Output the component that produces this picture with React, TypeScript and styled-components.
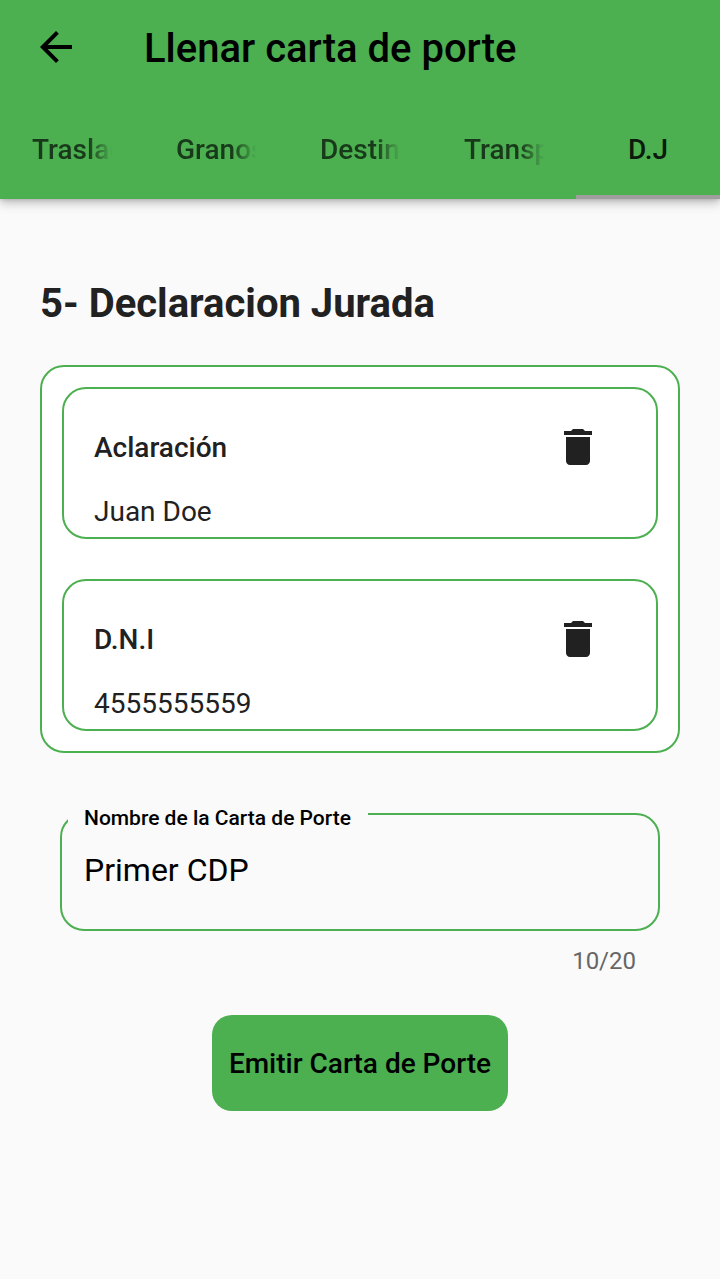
import React from 'react';
import styled, { createGlobalStyle } from 'styled-components';

const GREEN = '#4caf50';
const INK = '#212121';
const PAGE = '#fafafa';

const GlobalStyle = createGlobalStyle`
  *, *::before, *::after { box-sizing: border-box; }
  body { margin: 0; background: ${PAGE}; font-family: Roboto, sans-serif; }
`;

const Screen = styled.div`
  display: flex;
  flex-direction: column;
  width: 720px;
  height: 1279px;
  background: ${PAGE};
  overflow: hidden;
`;

const Header = styled.header`
  background: ${GREEN};
  height: 199px;
  flex: none;
  box-shadow: 0 4px 10px rgba(0, 0, 0, 0.24), 0 1px 4px rgba(0, 0, 0, 0.14);
`;

const Toolbar = styled.div`
  display: flex;
  align-items: center;
  height: 103px;
  padding: 0 32px 7px;
`;

const BackButton = styled.button`
  display: flex;
  padding: 0;
  border: 0;
  background: none;
  color: #000;
  margin: 0 64px 2px 0;
`;

const Title = styled.h1`
  margin: 2px 0 0;
  font-size: 40px;
  line-height: 48px;
  font-weight: 500;
  color: #000;
`;

const Tabs = styled.nav`
  display: grid;
  grid-template-columns: repeat(5, minmax(0, 1fr));
  height: 96px;
`;

const Tab = styled.div<{ $active?: boolean }>`
  display: flex;
  align-items: center;
  justify-content: center;
  padding: 2px 32px 0;
  border-bottom: 4px solid ${p => (p.$active ? '#9e9e9e' : 'transparent')};
  color: ${p => (p.$active ? 'rgba(0,0,0,0.87)' : 'rgba(0,0,0,0.67)')};
`;

const TabLabel = styled.span<{ $fade: boolean }>`
  overflow: hidden;
  white-space: nowrap;
  font-size: 28px;
  line-height: 36px;
  font-weight: 500;
  mask-image: ${p => (p.$fade ? 'linear-gradient(to right, #000 calc(100% - 24px), transparent)' : 'none')};
`;

const Content = styled.main`
  display: flex;
  flex-direction: column;
  padding: 81px 40px 0;
`;

const Heading = styled.h2`
  margin: 0 0 37px;
  font-size: 40px;
  line-height: 48px;
  font-weight: 700;
  color: ${INK};
`;

const CardGroup = styled.section`
  display: flex;
  flex-direction: column;
  gap: 40px;
  padding: 20px;
  border: 2px solid ${GREEN};
  border-radius: 24px;
  background: #fff;
`;

const Card = styled.article`
  height: 152px;
  padding: 34px 54px 0 30px;
  border: 2px solid ${GREEN};
  border-radius: 24px;
  background: #fff;
`;

const CardTop = styled.div`
  display: flex;
  align-items: center;
  justify-content: space-between;
  height: 48px;
  margin-bottom: 24px;
`;

const CardTitle = styled.h3`
  margin: 2px 0 0;
  font-size: 28px;
  line-height: 34px;
  font-weight: 500;
  color: ${INK};
`;

const CardValue = styled.p`
  margin: 0;
  font-size: 28px;
  line-height: 34px;
  color: ${INK};
`;

const IconButton = styled.button`
  display: flex;
  padding: 0;
  border: 0;
  background: none;
  color: ${INK};
`;

const Field = styled.label`
  position: relative;
  display: block;
  height: 118px;
  margin: 60px 20px 0;
  padding: 36px 22px 0;
  border: 2px solid ${GREEN};
  border-radius: 24px;
`;

const FieldLabel = styled.span`
  position: absolute;
  top: -10px;
  left: 6px;
  width: 300px;
  padding-left: 16px;
  background: ${PAGE};
  white-space: nowrap;
  font-size: 21px;
  line-height: 26px;
  font-weight: 500;
  color: #000;
`;

const FieldValue = styled.span`
  display: block;
  font-size: 32px;
  line-height: 38px;
  color: #000;
`;

const Counter = styled.div`
  margin: 15px 44px 0;
  text-align: right;
  font-size: 24px;
  line-height: 30px;
  color: #666;
`;

const SubmitButton = styled.button`
  align-self: center;
  width: 296px;
  height: 96px;
  margin-top: 39px;
  padding: 2px 0 0;
  border: 0;
  border-radius: 20px;
  background: ${GREEN};
  font: 500 28px/34px Roboto, sans-serif;
  white-space: nowrap;
  color: #000;
`;

const tabs = ['Traslado', 'Granos', 'Destino', 'Transporte', 'D.J'];
const cards = [
  { title: 'Aclaración', value: 'Juan Doe' },
  { title: 'D.N.I', value: '4555555559' },
];

const ArrowIcon = () => (
  <svg width="48" height="48" viewBox="0 0 24 24" fill="currentColor">
    <path d="M20 11H7.83l5.59-5.59L12 4l-8 8 8 8 1.41-1.41L7.83 13H20v-2z" />
  </svg>
);

const TrashIcon = () => (
  <svg width="48" height="48" viewBox="0 0 24 24" fill="currentColor">
    <path d="M6 19c0 1.1.9 2 2 2h8c1.1 0 2-.9 2-2V7H6v12zM19 4h-3.5l-1-1h-5l-1 1H5v2h14V4z" />
  </svg>
);

export default function App() {
  return (
    <Screen>
      <GlobalStyle />
      <Header>
        <Toolbar>
          <BackButton aria-label="Volver"><ArrowIcon /></BackButton>
          <Title>Llenar carta de porte</Title>
        </Toolbar>
        <Tabs>
          {tabs.map((tab, i) => (
            <Tab key={tab} $active={i === 4}>
              <TabLabel $fade={i !== 4}>{tab}</TabLabel>
            </Tab>
          ))}
        </Tabs>
      </Header>
      <Content>
        <Heading>5- Declaracion Jurada</Heading>
        <CardGroup>
          {cards.map(card => (
            <Card key={card.title}>
              <CardTop>
                <CardTitle>{card.title}</CardTitle>
                <IconButton aria-label="Eliminar"><TrashIcon /></IconButton>
              </CardTop>
              <CardValue>{card.value}</CardValue>
            </Card>
          ))}
        </CardGroup>
        <Field>
          <FieldLabel>Nombre de la Carta de Porte</FieldLabel>
          <FieldValue>Primer CDP</FieldValue>
        </Field>
        <Counter>10/20</Counter>
        <SubmitButton>Emitir Carta de Porte</SubmitButton>
      </Content>
    </Screen>
  );
}
